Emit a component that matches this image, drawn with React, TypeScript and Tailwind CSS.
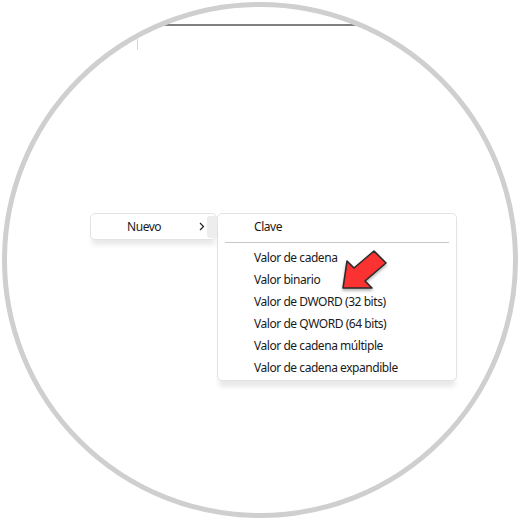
const items = [
  "Valor de cadena",
  "Valor binario",
  "Valor de DWORD (32 bits)",
  "Valor de QWORD (64 bits)",
  "Valor de cadena múltiple",
  "Valor de cadena expandible",
];

function RedArrow() {
  // arrow pointing down-left; viewBox uses page coordinates
  return (
    <svg
      className="absolute left-[321px] top-[229px]"
      width="70"
      height="64"
      viewBox="328 236 70 64"
    >
      <defs>
        <filter id="arrow-shadow" x="-20%" y="-20%" width="140%" height="140%">
          <feDropShadow dx="0" dy="2" stdDeviation="1.5" floodColor="#000" floodOpacity="0.3" />
        </filter>
      </defs>
      <polygon
        points="343,288 347,261 354,268 374,251 386,263 365,281 372,288"
        fill="#fb3030"
        stroke="#2a2a2a"
        strokeWidth="1.6"
        strokeLinejoin="round"
        filter="url(#arrow-shadow)"
      />
    </svg>
  );
}

export default function App() {
  return (
    <div className="w-[520px] h-[520px] bg-white p-[2px] font-['Noto_Sans',sans-serif] text-[12px] tracking-[-0.45px] text-[#1a1a1a]">
      <div className="relative w-[516px] h-[516px] rounded-full border-[5px] border-[#cfcfcf] overflow-hidden bg-white">
        <div className="mt-[17px] h-[2px] bg-[#808080]" />
        <div className="ml-[130px] w-px h-[24px] bg-[#d6d6d6]" />

        <div className="mt-[163px] ml-[83px] flex items-start">
          {/* parent menu */}
          <div className="relative w-[127px] h-[27px] rounded-[5px] border border-[#e3e3e3] bg-white shadow-[0_7px_5px_-2px_rgba(0,0,0,0.09)] flex items-center">
            <span className="ml-[36px] leading-none">Nuevo</span>
            <svg className="ml-auto mr-[11px]" width="6" height="9" viewBox="0 0 6 9">
              <path d="M1 1 L4.5 4.5 L1 8" fill="none" stroke="#222" strokeWidth="1.2" />
            </svg>
            <div className="absolute right-[-1px] top-[2px] w-[10px] h-[22px] rounded-l-[3px] bg-[#ededed]" />
          </div>

          {/* submenu */}
          <div className="w-[240px] rounded-[5px] border border-[#e3e3e3] bg-white shadow-[0_8px_5px_-2px_rgba(0,0,0,0.09)] pt-[2px] pb-px">
            <div className="h-[22px] pl-[36px] flex items-center">Clave</div>
            <div className="my-[4px] mx-[7px] h-px bg-[#c8c8c8]" />
            {items.map((t) => (
              <div key={t} className="h-[22px] pl-[36px] flex items-center">
                {t}
              </div>
            ))}
          </div>
        </div>

        <RedArrow />
      </div>
    </div>
  );
}
